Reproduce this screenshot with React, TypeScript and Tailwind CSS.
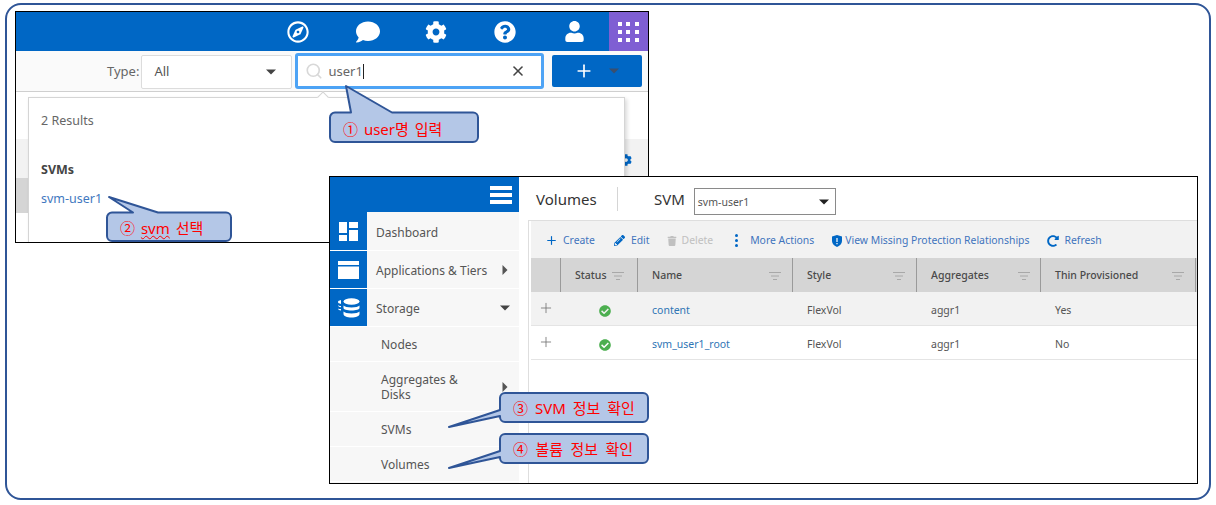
import React from "react";
import { FaRegCompass, FaComment, FaCog, FaQuestionCircle, FaUser, FaPencilAlt, FaTrash, FaCheckCircle, FaRedoAlt } from "react-icons/fa";
import { X, Plus, Search } from "lucide-react";

const Caret = ({ dir = "down", className = "" }: { dir?: "down" | "right"; className?: string }) => (
  <svg width="12" height="12" viewBox="0 0 12 12" className={className} fill="currentColor">
    {dir === "down" ? <path d="M1 3.5h10L6 8.5z" /> : <path d="M3.5 1v10L8.5 6z" />}
  </svg>
);

const FilterIcon = () => (
  <svg width="12" height="10" viewBox="0 0 12 10" className="text-[#a8a8a8]" stroke="currentColor" fill="none">
    <path d="M0 1.5h12M2 5h8M4 8.500h4" />
  </svg>
);

const Callout = ({ box, path, vb, children, textClass }: { box: string; path: string; vb: string; children: React.ReactNode; textClass: string }) => (
  <div className={box}>
    <svg className="absolute inset-0 h-full w-full overflow-visible" viewBox={vb}>
      <path d={path} fill="#b4c7e7" stroke="#2f5597" strokeWidth="2" strokeLinejoin="round" />
    </svg>
    <div className={"absolute whitespace-pre text-[15px] leading-[20px] text-[#ff0000] " + textClass}>{children}</div>
  </div>
);

const SideItem = ({ h, icon, label, arrow }: { h: string; icon: React.ReactNode; label: string; arrow?: "down" | "right" }) => (
  <div className={"flex items-stretch border-b border-white " + h}>
    <div className="flex w-[37px] shrink-0 items-center justify-center bg-[#0067c5] pt-[1px]">{icon}</div>
    <div className="flex flex-1 items-center justify-between bg-[#f7f7f7] pl-[9px] pr-[8px] pt-[3px] text-[12px] text-[#555]">
      <span>{label}</span>
      {arrow && <Caret dir={arrow} className={arrow === "down" ? "-mt-[3px] text-[#444]" : "-mt-[3px] text-[#555]"} />}
    </div>
  </div>
);

const SubItem = ({ h, children }: { h: string; children: React.ReactNode }) => (
  <div className={"flex items-center justify-between border-b border-white bg-[#f7f7f7] pl-[51px] pr-[8px] text-[12px] leading-[15px] text-[#555] " + h}>{children}</div>
);

const cols = "grid grid-cols-[29px_77px_155px_124px_124px_156px]";

const HeadCell = ({ label, right = "pr-[11px]", last }: { label: string; right?: string; last?: boolean }) => (
  <div className={"flex items-center justify-between border-l border-[#9a9a9a] pl-[14px] pt-[1px] text-[10.5px] font-medium text-[#4a4a4a] " + right + (last ? " border-r" : "")}>
    <span>{label}</span>
    <FilterIcon />
  </div>
);

const Row = ({ name, thin, bg }: { name: string; thin: string; bg: string }) => (
  <div className={cols + " h-[34px] items-center border-b border-[#e4e4e4] pt-[4px] text-[10.5px] text-[#555] " + bg}>
    <Plus size={16} strokeWidth={1.3} className="ml-[7px] -mt-[6px] text-[#777]" />
    <FaCheckCircle size={12} className="ml-[39px] mt-[1px] text-[#4caf50]" />
    <span className="pl-[15px] text-[#2f75b5]">{name}</span>
    <span className="pl-[15px]">FlexVol</span>
    <span className="pl-[15px]">aggr1</span>
    <span className="pl-[15px]">{thin}</span>
  </div>
);

const Action = ({ icon, label, cls = "text-[#3f74bd]", gap = "gap-[5px]", ml = "" }: { icon: React.ReactNode; label: string; cls?: string; gap?: string; ml?: string }) => (
  <div className={"flex items-center text-[10.4px] " + gap + " " + ml + " " + cls}>{icon}<span>{label}</span></div>
);

export default function App() {
  return (
    <div className="relative h-[505px] w-[1216px] overflow-hidden bg-white font-['Noto_Sans','Noto_Sans_CJK_KR',sans-serif]">
      <div className="absolute left-[5px] top-[3px] h-[497px] w-[1206px] rounded-[16px] border-2 border-[#2f5597]" />

      {/* Search window */}
      <div className="absolute left-[15px] top-[11px] flex h-[232px] w-[634px] flex-col overflow-hidden border border-black bg-white">
        <div className="flex h-[39px] shrink-0 items-stretch justify-end bg-[#0067c5] text-white">
          <div className="flex w-[68px] items-center justify-center"><FaRegCompass size={22} /></div>
          <div className="flex w-[70px] items-center justify-center pl-[2px]"><FaComment size={24} /></div>
          <div className="flex w-[68px] items-center justify-center"><FaCog size={22} /></div>
          <div className="flex w-[69px] items-center justify-center"><FaQuestionCircle size={22} /></div>
          <div className="mr-[2px] flex w-[68px] items-center justify-center pl-[2px]"><FaUser size={21} /></div>
          <div className="grid w-[39px] grid-cols-3 content-center justify-center justify-items-center gap-[4px] bg-[#7f5fd3] px-[9px]">
            {Array.from({ length: 9 }).map((_, i) => <span key={i} className="h-[4px] w-[4px] bg-white" />)}
          </div>
        </div>
        <div className="flex h-[41px] shrink-0 items-center border-b border-[#cfcfcf] bg-[#fafafa] pl-[91px]">
          <span className="mr-[2px] pt-[1px] text-[13px] text-[#666]">Type:</span>
          <div className="mt-[1px] flex h-[34px] w-[151px] items-center justify-between rounded-[2px] border border-[#dcdcdc] bg-white pl-[12px] pr-[14px] text-[13px] text-[#555]">
            <span>All</span><Caret className="text-[#444]" />
          </div>
          <div className="ml-[3px] flex h-[36px] w-[249px] items-center rounded-[3px] border-[3px] border-[#4da3f5] bg-white pl-[7px] pr-[15px]">
            <Search size={18} strokeWidth={2.2} className="text-[#d8d8d8]" />
            <span className="ml-[5px] mt-[1px] border-r border-[#222] text-[13px] leading-[15px] text-[#666]">user1</span>
            <X size={16} strokeWidth={2.4} className="ml-auto text-[#444]" />
          </div>
          <div className="ml-[8px] flex h-[32px] w-[90px] items-center justify-center gap-[14px] rounded-[2px] bg-[#0067c5] text-white">
            <Plus size={20} strokeWidth={2} /><Caret className="text-[#3a4f6e]" />
          </div>
        </div>
        <div className="relative flex-1 bg-white">
          <div className="absolute left-0 right-0 top-[47px] h-[39px] bg-[#f2f2f2]" />
          <div className="absolute left-0 right-0 top-[86px] h-[35px] bg-[#d5d5d5]" />
          <FaCog size={12} className="absolute left-[604px] top-[62px] text-[#0067c5]" />
          <div className="absolute left-[12px] top-[5px] h-[150px] w-[597px] border border-[#d5d5d5] bg-white pl-[12px] shadow-[2px_2px_4px_rgba(0,0,0,0.15)]">
            <div className="mt-[15px] text-[12.5px] leading-[16px] text-[#666]">2 Results</div>
            <div className="mt-[33px] text-[12.5px] font-bold leading-[16px] text-[#444]">SVMs</div>
            <div className="mt-[13px] text-[12.5px] leading-[16px] text-[#3f78c0]">svm-user1</div>
          </div>
          <div className="absolute left-[303px] top-[1px] h-[8px] w-[8px] rotate-45 border-l border-t border-[#d5d5d5] bg-white" />
        </div>
      </div>

      {/* Volumes window */}
      <div className="absolute left-[329px] top-[176px] flex h-[308px] w-[869px] overflow-hidden border border-black bg-white">
        <div className="flex w-[189px] shrink-0 flex-col bg-[#f7f7f7]">
          <div className="flex h-[35px] shrink-0 items-center justify-end bg-[#0067c5] pr-[7px]">
            <div className="flex w-[22px] flex-col gap-[3px]">
              <span className="h-[4px] bg-white" /><span className="h-[4px] bg-white" /><span className="h-[4px] bg-white" />
            </div>
          </div>
          <SideItem h="h-[39px]" label="Dashboard" icon={
            <svg width="19" height="19" viewBox="0 0 19 19" fill="#fff"><path d="M0 0h8v11H0zM10 0h9v6h-9zM0 13h8v6H0zM10 8h9v11h-9z" /></svg>} />
          <SideItem h="h-[38px]" label="Applications & Tiers" arrow="right" icon={
            <svg width="21" height="18" viewBox="0 0 21 18" fill="#fff"><path d="M0 0h21v4H0zM0 5.500h21V18H0z" /></svg>} />
          <SideItem h="h-[38px]" label="Storage" arrow="down" icon={
            <svg width="23" height="20" viewBox="0 0 23 20" fill="#fff"><path d="M4 2C2 2.500 1 3 1 4s1 1.500 3 2zM1 7c0 1 1 2 3 2.200V8C2.500 8 1.500 7.600 1 7zM1 10.500c0 1 1 1.800 3 2v-1.500C2.500 11 1.500 11 1 10.500z" /><ellipse cx="14.500" cy="3.500" rx="8" ry="3.300" /><path d="M6.500 7.500c1 1.300 4 2 8 2s7-.7 8-2v2.500c0 1.500-3.500 2.500-8 2.500s-8-1-8-2.500zM6.500 13.500c1 1.300 4 2 8 2s7-.7 8-2V16c0 2-3.500 3.500-8 3.500s-8-1.500-8-3.500z" /></svg>} />
          <SubItem h="h-[35px]">Nodes</SubItem>
          <SubItem h="h-[50px]"><span>Aggregates &amp;<br />Disks</span><Caret dir="right" className="text-[#555]" /></SubItem>
          <SubItem h="h-[35px]">SVMs</SubItem>
          <SubItem h="h-[35px]">Volumes</SubItem>
        </div>
        <div className="flex min-w-0 flex-1 flex-col">
          <div className="flex h-[43px] shrink-0 items-center pl-[17px] pt-[3px]">
            <span className="mb-[2px] w-[82px] border-r border-[#d5d5d5] text-[15px] leading-[24px] text-[#333]">Volumes</span>
            <span className="mb-[2px] ml-[36px] text-[15px] text-[#333]">SVM</span>
            <div className="ml-[9px] mt-[2px] flex h-[27px] w-[142px] items-center justify-between border border-[#8a8a8a] bg-white pl-[3px] pr-[5px] pt-[1px] text-[10.5px] text-[#555]">
              <span className="pt-[2px]">svm-user1</span><Caret className="text-[#222]" />
            </div>
          </div>
          <div className="ml-[9px] flex-1 border-l border-t border-[#dedede] pl-[2px]">
            <div className="flex h-[37px] items-center bg-[#f2f2f2] pl-[14px] pt-[3px]">
              <Action icon={<Plus size={13} strokeWidth={2.2} className="text-[#0067c5]" />} label="Create" />
              <Action ml="ml-[19px]" gap="gap-[6px]" icon={<FaPencilAlt size={11} className="text-[#0067c5]" />} label="Edit" />
              <Action ml="ml-[17px]" cls="text-[#c0c0c0]" icon={<FaTrash size={10} />} label="Delete" />
              <Action ml="ml-[22px]" gap="gap-[12px]" icon={<span className="flex flex-col gap-[2px]"><i className="h-[3px] w-[3px] rounded-full bg-[#0067c5]" /><i className="h-[3px] w-[3px] rounded-full bg-[#0067c5]" /><i className="h-[3px] w-[3px] rounded-full bg-[#0067c5]" /></span>} label="More Actions" />
              <div className="ml-[18px] flex items-center gap-[3px] text-[10.4px] text-[#3f74bd]">
                <svg width="10" height="12" viewBox="0 0 10 12" fill="#0067c5"><path d="M5 0l5 1.500V6c0 3-2.500 5-5 6-2.500-1-5-3-5-6V1.500z" /><path d="M4.400 3h1.200v4H4.400zM4.400 8h1.200v1.200H4.400z" fill="#fff" /></svg>
                <span>View Missing Protection Relationships</span>
              </div>
              <Action ml="ml-[18px]" icon={<FaRedoAlt size={12} className="text-[#0067c5]" />} label="Refresh" />
            </div>
            <div className={cols + " h-[34px] bg-[#d5d5d5]"}>
              <div />
              <HeadCell label="Status" right="pr-[13px]" />
              <HeadCell label="Name" />
              <HeadCell label="Style" />
              <HeadCell label="Aggregates" right="pr-[10px]" />
              <HeadCell label="Thin Provisioned" last />
            </div>
            <Row name="content" thin="Yes" bg="bg-[#f2f2f2]" />
            <Row name="svm_user1_root" thin="No" bg="bg-white" />
          </div>
        </div>
      </div>

      {/* Annotations */}
      <Callout box="absolute left-[329px] top-[86px] h-[57px] w-[150px]" vb="0 0 150 57"
        path="M6 26.500H22L17 0L63 26.500H144a5 5 0 0 1 5 5V51a5 5 0 0 1-5 5H6a5 5 0 0 1-5-5V31.500a5 5 0 0 1 5-5z" textClass="left-[14px] top-[33px] [word-spacing:2px]">① user명 입력</Callout>
      <Callout box="absolute left-[106px] top-[197px] h-[45px] w-[126px]" vb="0 0 126 45"
        path="M6 15.500H27L3 0L52 15.500H120a5 5 0 0 1 5 5V39a5 5 0 0 1-5 5H6a5 5 0 0 1-5-5V20.500a5 5 0 0 1 5-5z" textClass="left-[14px] top-[21px] [word-spacing:2px]"><>② <span className="underline decoration-wavy decoration-[#ff0000] decoration-1">svm</span> 선택</></Callout>
      <Callout box="absolute left-[449px] top-[392px] h-[36px] w-[200px]" vb="0 0 200 36"
        path="M56 1H194a5 5 0 0 1 5 5V25a5 5 0 0 1-5 5H56a5 5 0 0 1-5-5V24L0 35L51 18V6a5 5 0 0 1 5-5z" textClass="left-[64px] top-[6px] [word-spacing:3px]">③ SVM 정보 확인</Callout>
      <Callout box="absolute left-[449px] top-[433px] h-[36px] w-[200px]" vb="0 0 200 36"
        path="M56 1H194a5 5 0 0 1 5 5V25a5 5 0 0 1-5 5H56a5 5 0 0 1-5-5V24L0 35L51 18V6a5 5 0 0 1 5-5z" textClass="left-[64px] top-[6px] [word-spacing:3.500px]">④ 볼륨 정보 확인</Callout>
    </div>
  );
}
